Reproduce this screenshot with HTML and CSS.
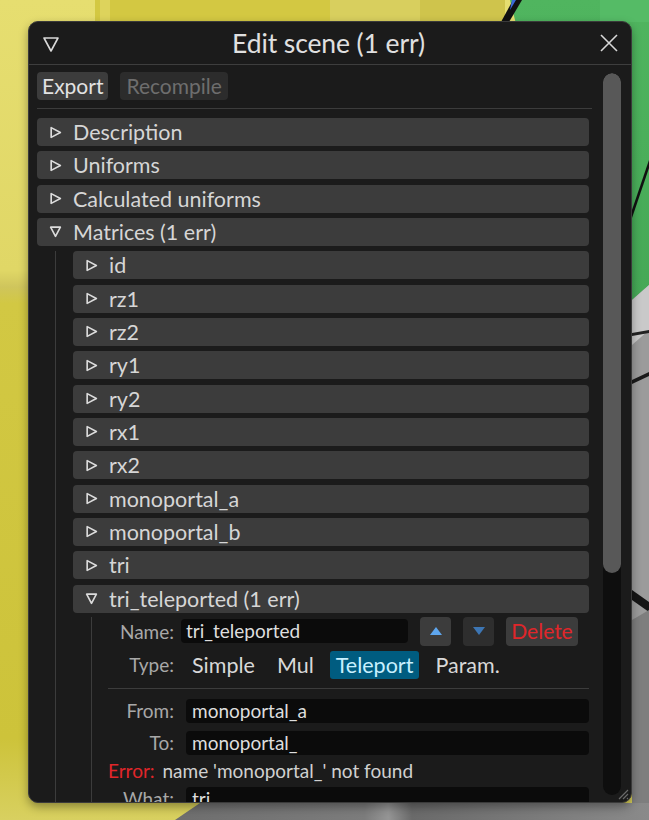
FILE: index.html
```html
<!DOCTYPE html>
<html>
<head>
<meta charset="utf-8">
<link rel="stylesheet" href="styles.css">
</head>
<body>
<svg class="scene" width="649" height="820" viewBox="0 0 649 820">
  <defs>
    <linearGradient id="yl" x1="0" y1="0" x2="0" y2="1">
      <stop offset="0" stop-color="#e6de70"/>
      <stop offset="0.33" stop-color="#e0d766"/>
      <stop offset="0.35" stop-color="#cfc55c"/>
      <stop offset="0.37" stop-color="#d2c843"/>
      <stop offset="0.9" stop-color="#cdc33a"/>
      <stop offset="1" stop-color="#d8d060"/>
    </linearGradient>
    <linearGradient id="gr" x1="0" y1="0" x2="0" y2="1">
      <stop offset="0" stop-color="#50b55f"/>
      <stop offset="1" stop-color="#45a856"/>
    </linearGradient>
    <linearGradient id="gy" x1="0" y1="0" x2="1" y2="0">
      <stop offset="0" stop-color="#6e6e6e"/>
      <stop offset="0.4" stop-color="#7c7c7c"/>
      <stop offset="0.45" stop-color="#959595"/>
      <stop offset="0.5" stop-color="#6a6a6a"/>
      <stop offset="1" stop-color="#8a8a8a"/>
    </linearGradient>
  </defs>
  <rect x="0" y="0" width="649" height="820" fill="url(#yl)"/>
  <rect x="95" y="0" width="235" height="22" fill="#d3c842"/>
  <rect x="100" y="0" width="10" height="22" fill="#ddd35c"/>
  <rect x="330" y="0" width="90" height="22" fill="#d8cf5e"/>
  <rect x="420" y="0" width="85" height="22" fill="#cfc44c"/>
  <polygon points="510,0 649,0 649,300 600,300 520,40" fill="url(#gr)"/>
  <rect x="600" y="0" width="49" height="22" fill="#55bb66"/>
  <polygon points="501,22 509,22 522,0 513,0" fill="#111"/>
  <polygon points="512,0 516,0 510,10" fill="#3a6ad8"/>
  <polygon points="632,300 649,285 649,820 632,820" fill="#9b9b9b"/>
  <polygon points="632,300 649,285 649,330 632,345" fill="#c9c9c9"/>
  <polygon points="632,210 649,160 649,168 632,218" fill="#111"/>
  <polygon points="632,333 649,330 649,333 632,336" fill="#222"/>
  <polygon points="632,380 649,372 649,376 632,384" fill="#1a1a1a"/>
  <polygon points="632,590 649,602 649,612 632,600" fill="#151515"/>
  <polygon points="632,620 649,610 649,820 632,820" fill="#7e7e7e"/>
  <polygon points="200,803 649,803 649,820 175,820" fill="url(#gy)"/>
</svg>

<div class="window">
  <div class="titlebar">
    <svg class="collapse-ico" width="18" height="18" viewBox="0 0 18 18"><polygon points="2,3 16,3 9,16" fill="none" stroke="#d8d8d8" stroke-width="1.6" stroke-linejoin="round"/></svg>
    <div class="title">Edit scene (1 err)</div>
    <svg class="close-ico" width="20" height="20" viewBox="0 0 20 20"><path d="M2 2 L18 18 M18 2 L2 18" stroke="#d8d8d8" stroke-width="1.6" fill="none"/></svg>
  </div>
  <div class="wbody">
    <div class="content">
      <div class="toolbar">
        <div class="btn">Export</div>
        <div class="btn disabled">Recompile</div>
      </div>
      <div class="sep"></div>
      <div class="list">
        <div class="hdr"><svg class="tri" viewBox="0 0 12 12"><polygon points="2,1.5 10.5,6 2,10.5"/></svg><span>Description</span></div>
        <div class="hdr"><svg class="tri" viewBox="0 0 12 12"><polygon points="2,1.5 10.5,6 2,10.5"/></svg><span>Uniforms</span></div>
        <div class="hdr"><svg class="tri" viewBox="0 0 12 12"><polygon points="2,1.5 10.5,6 2,10.5"/></svg><span>Calculated uniforms</span></div>
        <div class="hdr"><svg class="tri" viewBox="0 0 12 12"><polygon points="1.5,2 10.5,2 6,10.5"/></svg><span>Matrices (1 err)</span></div>
        <div class="indent">
          <div class="list">
            <div class="hdr"><svg class="tri" viewBox="0 0 12 12"><polygon points="2,1.5 10.5,6 2,10.5"/></svg><span>id</span></div>
            <div class="hdr"><svg class="tri" viewBox="0 0 12 12"><polygon points="2,1.5 10.5,6 2,10.5"/></svg><span>rz1</span></div>
            <div class="hdr"><svg class="tri" viewBox="0 0 12 12"><polygon points="2,1.5 10.5,6 2,10.5"/></svg><span>rz2</span></div>
            <div class="hdr"><svg class="tri" viewBox="0 0 12 12"><polygon points="2,1.5 10.5,6 2,10.5"/></svg><span>ry1</span></div>
            <div class="hdr"><svg class="tri" viewBox="0 0 12 12"><polygon points="2,1.5 10.5,6 2,10.5"/></svg><span>ry2</span></div>
            <div class="hdr"><svg class="tri" viewBox="0 0 12 12"><polygon points="2,1.5 10.5,6 2,10.5"/></svg><span>rx1</span></div>
            <div class="hdr"><svg class="tri" viewBox="0 0 12 12"><polygon points="2,1.5 10.5,6 2,10.5"/></svg><span>rx2</span></div>
            <div class="hdr"><svg class="tri" viewBox="0 0 12 12"><polygon points="2,1.5 10.5,6 2,10.5"/></svg><span>monoportal_a</span></div>
            <div class="hdr"><svg class="tri" viewBox="0 0 12 12"><polygon points="2,1.5 10.5,6 2,10.5"/></svg><span>monoportal_b</span></div>
            <div class="hdr"><svg class="tri" viewBox="0 0 12 12"><polygon points="2,1.5 10.5,6 2,10.5"/></svg><span>tri</span></div>
            <div class="hdr"><svg class="tri" viewBox="0 0 12 12"><polygon points="1.5,2 10.5,2 6,10.5"/></svg><span>tri_teleported (1 err)</span></div>
            <div class="indent inner">
              <div class="row name-row">
                <div class="lbl">Name:</div>
                <div class="input name-input">tri_teleported</div>
                <div class="btn ibtn"><svg width="14" height="10" viewBox="0 0 14 10"><polygon points="7,1 13,9 1,9" fill="#5ea6ee"/></svg></div>
                <div class="btn ibtn dark"><svg width="14" height="10" viewBox="0 0 14 10"><polygon points="1,1 13,1 7,9" fill="#3d76b4"/></svg></div>
                <div class="btn del">Delete</div>
              </div>
              <div class="row type-row">
                <div class="lbl">Type:</div>
                <div class="opts">
                  <span class="opt">Simple</span>
                  <span class="opt">Mul</span>
                  <span class="opt sel">Teleport</span>
                  <span class="opt">Param.</span>
                </div>
              </div>
              <div class="sep isep"></div>
              <div class="grid">
                <div class="lbl">From:</div><div class="input">monoportal_a</div>
                <div class="lbl">To:</div><div class="input">monoportal_</div>
              </div>
              <div class="err"><span class="err-k">Error:</span> name 'monoportal_' not found</div>
              <div class="grid">
                <div class="lbl">What:</div><div class="input">tri</div>
              </div>
            </div>
          </div>
        </div>
      </div>
    </div>
    <div class="scrollbar"><div class="thumb"></div></div>
  </div>
  <svg class="grip" width="14" height="14" viewBox="0 0 14 14"><path d="M13 4 L4 13 M13 8 L8 13 M13 12 L12 13" stroke="#6a6a6a" stroke-width="1.2"/></svg>
</div>
</body>
</html>
```
FILE: styles.css
```css
* { box-sizing: border-box; }
html, body {
  margin: 0;
  padding: 0;
  width: 649px;
  height: 820px;
  overflow: hidden;
  background: #d4cb45;
  font-family: Lato, "Noto Sans", sans-serif;
}
body { position: relative; }
.scene { position: absolute; left: 0; top: 0; }

.window {
  position: absolute;
  left: 28px;
  top: 21px;
  width: 604px;
  height: 782px;
  background: #1b1b1b;
  border: 1px solid #3a3a3a;
  border-radius: 10px;
  overflow: hidden;
  box-shadow: 0 4px 10px rgba(0,0,0,0.35);
  display: flex;
  flex-direction: column;
}
.titlebar {
  height: 43px;
  flex: none;
  border-bottom: 1px solid #3e3e3e;
  display: flex;
  align-items: center;
  position: relative;
  padding: 0 12px 0 13px;
}
.collapse-ico { flex: none; margin-top: 2px; }
.title {
  flex: 1;
  text-align: center;
  color: #e0e0e0;
  font-size: 26.5px;
  font-weight: 400;
  letter-spacing: -0.1px;
  padding-right: 2px;
}
.close-ico { flex: none; }

.wbody {
  flex: 1;
  display: flex;
  padding: 7px 10px 0 8px;
  min-height: 0;
}
.content {
  width: 555px;
  flex: none;
  overflow: hidden;
}
.scrollbar {
  margin-left: 11px;
  width: 18px;
  height: 722px;
  flex: none;
  margin-top: 1px;
  background: #0e0e0e;
  border-radius: 9px;
  overflow: hidden;
}
.thumb {
  height: 500px;
  background: #585858;
  border-radius: 9px;
}

.toolbar {
  display: flex;
  gap: 12px;
  height: 28px;
}
.btn {
  background: #3c3c3c;
  border-radius: 4px;
  color: #e2e2e2;
  font-size: 21px;
  font-weight: 400;
  height: 28px;
  line-height: 28px;
  padding: 0 5px;
  display: flex;
  align-items: center;
  justify-content: center;
}
.btn.disabled {
  background: #2c2c2c;
  color: #6e6e6e;
  padding: 0 6px;
}
.sep {
  height: 1px;
  background: #3c3c3c;
  margin: 8px 0 9px 0;
}

.list {
  display: flex;
  flex-direction: column;
  gap: 5.333px;
  width: 552px;
}
.hdr {
  height: 28px;
  background: #3c3c3c;
  border-radius: 4px;
  display: flex;
  align-items: center;
  padding-left: 12px;
  color: #d6d6d6;
  font-size: 21.5px;
  font-weight: 400;
  flex: none;
}
.tri {
  width: 13px;
  height: 13px;
  margin-right: 11px;
  flex: none;
}
.tri polygon {
  fill: none;
  stroke: #dcdcdc;
  stroke-width: 1.5;
  stroke-linejoin: round;
}
.indent {
  margin-left: 18px;
  border-left: 1px solid #3c3c3c;
  padding-left: 17px;
}
.indent .list { width: 516px; }
.inner {
  padding-left: 16px;
  width: 498px;
  margin-top: -1.333px;
}
.row {
  display: flex;
  align-items: center;
}
.lbl {
  width: 66px;
  flex: none;
  text-align: right;
  color: #a8a8a8;
  font-size: 19px;
  font-weight: 400;
}
.name-row { height: 29px; }
.name-row .lbl { margin-right: 7px; }
.input {
  background: #0b0b0b;
  border-radius: 4px;
  height: 24px;
  line-height: 24px;
  color: #dedede;
  font-size: 19px;
  font-weight: 400;
  padding-left: 6px;
  overflow: hidden;
  white-space: nowrap;
}
.name-input {
  width: 227px;
  padding-left: 5px;
}
.ibtn {
  width: 31px;
  height: 29px;
  margin-left: 12px;
  padding: 0;
}
.ibtn.dark { background: #2e2e2e; }
.del {
  margin-left: 12px;
  width: 72px;
  height: 29px;
  color: #e0262a;
  padding: 0;
}
.type-row {
  height: 28px;
  margin-top: 5px;
}
.opts {
  display: flex;
  gap: 10px;
  margin-left: 18px;
}
.opt {
  color: #d8d8d8;
  font-size: 21.5px;
  font-weight: 400;
  height: 28px;
  line-height: 28px;
  padding: 0 6px;
  border-radius: 3px;
}
.opts .opt:first-child { margin-left: -6px; }
.opt.sel {
  background: #005c80;
  color: #c8f0ff;
}
.isep {
  margin: 9px 0 10px 0;
}
.grid {
  display: grid;
  grid-template-columns: 66px 1fr;
  column-gap: 12px;
  row-gap: 8px;
  align-items: center;
}
.err {
  height: 24px;
  margin-top: 4px;
  margin-bottom: 4px;
  line-height: 24px;
  font-size: 19px;
  font-weight: 400;
  color: #d0d0d0;
}
.err-k { color: #e0262a; margin-right: 3px; }

.grip {
  position: absolute;
  right: 2px;
  bottom: 2px;
}
```
